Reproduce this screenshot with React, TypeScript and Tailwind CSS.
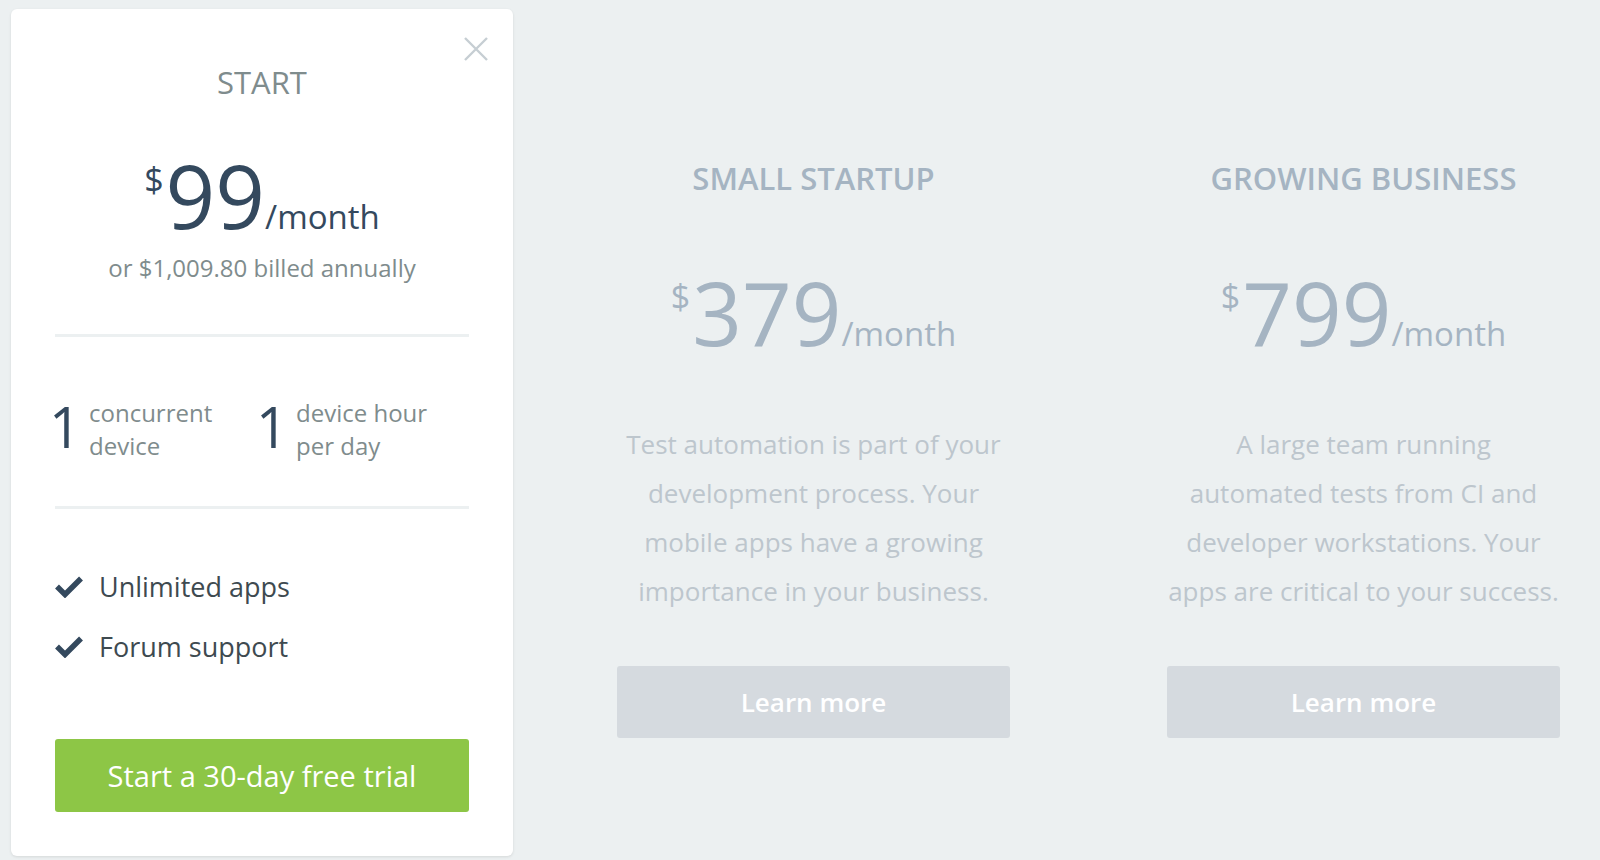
import { type ReactNode } from 'react'

const plans = [
  {
    name: 'SMALL STARTUP',
    price: '379',
    lines: [
      'Test automation is part of your',
      'development process. Your',
      'mobile apps have a growing',
      'importance in your business.',
    ],
  },
  {
    name: 'GROWING BUSINESS',
    price: '799',
    lines: [
      'A large team running',
      'automated tests from CI and',
      'developer workstations. Your',
      'apps are critical to your success.',
    ],
  },
]

function Price({ amount, tone }: { amount: string; tone: string }) {
  return (
    <div className={`flex items-start justify-center ${tone}`}>
      <span className="mt-[10px] mr-[2px] text-[34px] leading-none">$</span>
      <span className="text-[87px] leading-none">{amount}</span>
      <span className="mt-[48px] text-[33px] leading-none">/month</span>
    </div>
  )
}

function Stat({ value, children }: { value: string; children: ReactNode }) {
  return (
    <div className="flex items-start">
      <span className="-ml-[6px] mt-[2px] w-[40px] text-[56px] leading-none text-[#34495e]">{value}</span>
      <span className="text-[24px] leading-[33px] text-[#7f8c8d]">{children}</span>
    </div>
  )
}

function CheckIcon() {
  return (
    <svg width="28" height="22" viewBox="0 0 28 22" className="shrink-0">
      <path d="M2 10.5 L10 18.5 L26 2.5" fill="none" stroke="#34495e" strokeWidth="5.5" />
    </svg>
  )
}

function StartCard() {
  return (
    <div className="relative ml-[11px] mt-[9px] flex h-[847px] w-[502px] shrink-0 flex-col rounded-md bg-white px-[44px] pb-[44px] shadow-[0_1px_3px_rgba(0,0,0,0.10)]">
      <button className="absolute right-[25px] top-[28px]">
        <svg width="24" height="24" viewBox="0 0 24 24">
          <path d="M1 1 L23 23 M23 1 L1 23" stroke="#c6ced3" strokeWidth="2.4" />
        </svg>
      </button>

      <h2 className="mt-[58px] text-center text-[31px] leading-none text-[#7f8c8d]">START</h2>

      <div className="mt-[54px]">
        <Price amount="99" tone="text-[#34495e]" />
      </div>
      <p className="mt-[17px] text-center text-[24px] leading-none text-[#7f8c8d]">
        or $1,009.80 billed annually
      </p>

      <div className="mt-[54px] h-[3px] bg-[#ecf0f1]" />

      <div className="mt-[59px] grid grid-cols-2">
        <Stat value="1">
          concurrent
          <br />
          device
        </Stat>
        <Stat value="1">
          device hour
          <br />
          per day
        </Stat>
      </div>

      <div className="mt-[44px] h-[3px] bg-[#ecf0f1]" />

      <ul className="mt-[60px] flex flex-col gap-[24px]">
        {['Unlimited apps', 'Forum support'].map((f) => (
          <li key={f} className="flex items-center gap-[16px] text-[27px] leading-[36px] text-[#3e4a50]">
            <CheckIcon />
            {f}
          </li>
        ))}
      </ul>

      <button className="mt-auto h-[73px] w-full rounded-[3px] bg-[#8dc646] text-[29px] text-white">
        Start a 30-day free trial
      </button>
    </div>
  )
}

export default function App() {
  return (
    <div className="flex h-[860px] w-[1600px] overflow-hidden bg-[#ecf0f1] font-['Open_Sans',sans-serif]">
      <StartCard />
      <div className="ml-[104px] flex gap-[157px]">
        {plans.map((p) => (
          <div key={p.name} className="flex w-[393px] flex-col items-center">
            <h2 className="mt-[163px] text-[31px] font-semibold leading-none text-[#a5b4c2]">{p.name}</h2>
            <div className="mt-[75px]">
              <Price amount={p.price} tone="text-[#a5b4c2]" />
            </div>
            <p className="mt-[64px] text-center text-[26px] leading-[49px] text-[#bdc6cd]">
              {p.lines.map((l) => (
                <span key={l} className="block whitespace-nowrap">
                  {l}
                </span>
              ))}
            </p>
            <button className="mt-[50px] h-[72px] w-full rounded-[3px] bg-[#d5dadf] text-[26px] font-semibold text-white">
              Learn more
            </button>
          </div>
        ))}
      </div>
    </div>
  )
}
